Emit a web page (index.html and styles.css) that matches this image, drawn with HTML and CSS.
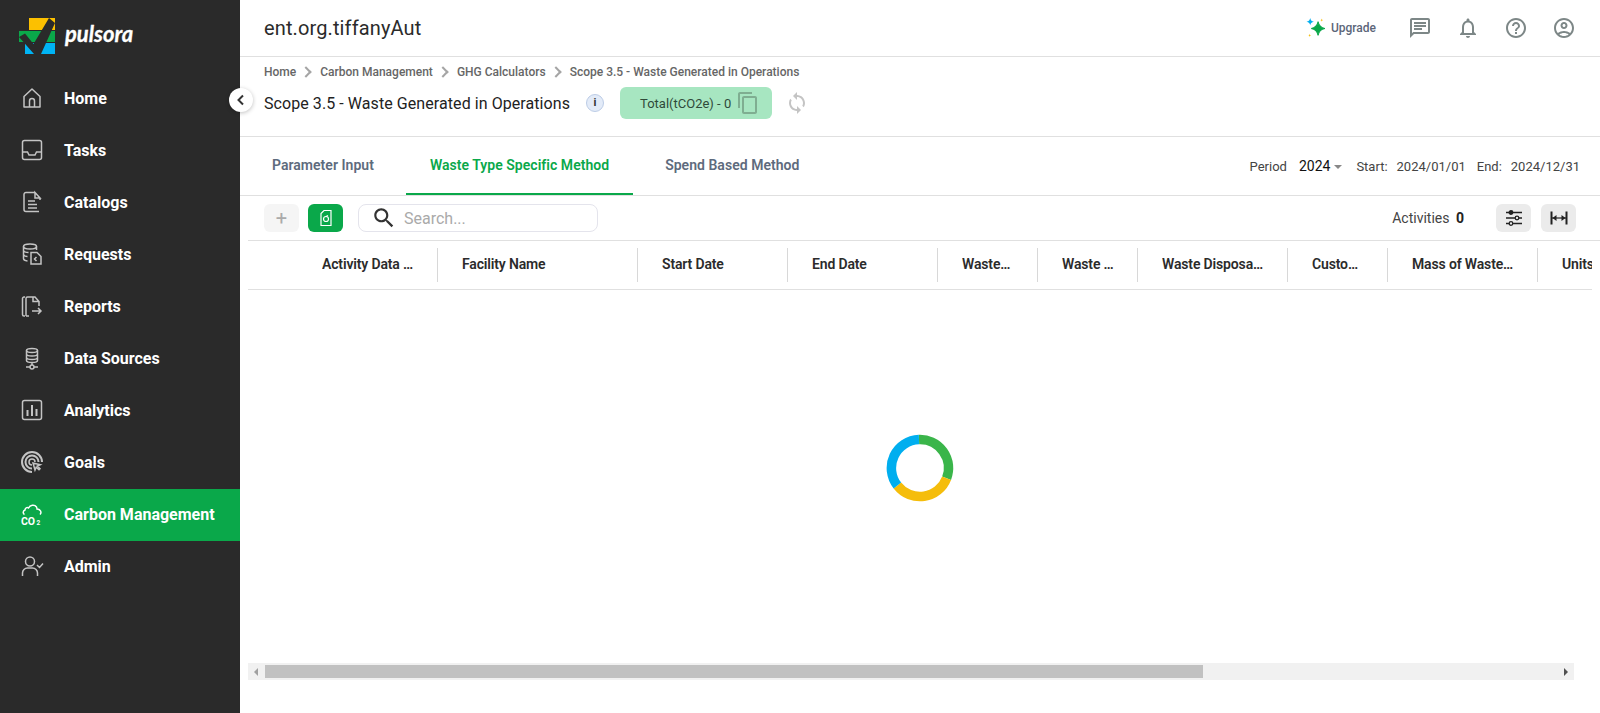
FILE: index.html
```html
<!DOCTYPE html>
<html lang="en">
<head>
    <meta charset="UTF-8">
    <meta name="viewport" content="width=device-width, initial-scale=1.0">
    <title>Pulsora</title>
    <link rel="stylesheet" href="styles.css">
</head>
<body>
<div class="app">
    <aside class="sidebar">
        <div class="logo">
            <svg class="logo-mark" width="38" height="38" viewBox="0 0 38 38">
                <path d="M10 0h26v12H10z" fill="#fcc000"/>
                <path d="M0 13h36v11H0z" fill="#0aa84a"/>
                <path d="M6 25h30v11H6z" fill="#00b4f5"/>
                <path d="M0 19l6-3.500L14.500 26 30 0l6 5-14 31h-7z" fill="#2a2a2a"/>
            </svg>
            <span class="logo-text">pulsora</span>
        </div>
        <nav class="nav">
            <a class="nav-item">
                <svg class="nav-icon" viewBox="0 0 24 24"><path d="M4 21V10.500L12 3l8 7.500V21z" stroke-linejoin="round"/><path d="M9.500 21v-6a2.500 2.500 0 0 1 5 0v6"/></svg>
                <span>Home</span>
            </a>
            <a class="nav-item">
                <svg class="nav-icon" viewBox="0 0 24 24"><rect x="2.500" y="2.500" width="19" height="19" rx="2"/><path d="M2.500 14h5l1.500 3h6l1.500-3h5"/></svg>
                <span>Tasks</span>
            </a>
            <a class="nav-item">
                <svg class="nav-icon" viewBox="0 0 24 24"><path d="M15 2.500H6a2 2 0 0 0-2 2v15a2 2 0 0 0 2 2h13"/><path d="M15 2.500l5 5.500h-5zM20 8v2M8 11h7M8 14.500h9M8 18h9"/></svg>
                <span>Catalogs</span>
            </a>
            <a class="nav-item">
                <svg class="nav-icon" viewBox="0 0 24 24"><ellipse cx="10" cy="4.500" rx="6.500" ry="2.500"/><path d="M3.500 4.500v12c0 1.300 1.500 2.200 4 2.400M16.500 4.500V8M3.500 8.500c.5 1.300 2.500 2 5 2M3.500 12.500c.5 1.300 2 2 4 2"/><path d="M11 10.500h6l4 4v7.500H11z"/><path d="M16.500 15l-2 2 2 2"/></svg>
                <span>Requests</span>
            </a>
            <a class="nav-item">
                <svg class="nav-icon" viewBox="0 0 24 24"><path d="M5 3H4a1.500 1.500 0 0 0-1.500 1.500v16A1.500 1.500 0 0 0 4 22h1"/><path d="M6 22V4.500A1.500 1.500 0 0 1 7.500 3H15l4 4.500V12M6 22h3M13 3v4.500h6M12 17h9M18 14l3 3-3 3"/></svg>
                <span>Reports</span>
            </a>
            <a class="nav-item">
                <svg class="nav-icon" viewBox="0 0 24 24"><ellipse cx="12" cy="4.500" rx="5.500" ry="2"/><path d="M6.500 4.500v10c0 1.100 2.500 2 5.500 2s5.500-.9 5.500-2v-10M6.500 8c0 1.100 2.500 2 5.500 2s5.500-.9 5.500-2M6.500 11.500c0 1.100 2.500 2 5.500 2s5.500-.9 5.500-2M12 16.500V19M6 21h4M14 21h4"/><circle cx="12" cy="21" r="2"/></svg>
                <span>Data Sources</span>
            </a>
            <a class="nav-item">
                <svg class="nav-icon" viewBox="0 0 24 24"><rect x="2.500" y="2.500" width="19" height="19" rx="2"/><path d="M7.500 12v6M12 7v11M16.500 11v7" stroke-width="2"/></svg>
                <span>Analytics</span>
            </a>
            <a class="nav-item">
                <svg class="nav-icon" viewBox="0 0 24 24"><path d="M12 22a10 10 0 1 1 10-10" stroke-width="2"/><path d="M12 18.500a6.500 6.500 0 1 1 6.500-6.500" stroke-width="2"/><path d="M12 15a3 3 0 1 1 3-3"/><path d="M13 13l2 7 1.200-2.800 2.800 2.600 1-1-2.600-2.800 2.800-1.200z" fill="#2a2a2a"/></svg>
                <span>Goals</span>
            </a>
            <a class="nav-item active">
                <svg class="nav-icon" viewBox="0 0 24 24"><path d="M4.500 12.500c-2-1-1.500-4 .5-4.500 0-2 2-3 3.500-2C10 3 14.500 2 16.500 5c.5 1 .5 1.500.5 2 3.500 0 5 3.500 3 5.500"/><text class="co2" x="1" y="22.500">CO</text><text class="co2-sub" x="16.500" y="22.500">2</text></svg>
                <span>Carbon Management</span>
            </a>
            <a class="nav-item">
                <svg class="nav-icon" viewBox="0 0 24 24"><circle cx="10" cy="7.500" r="4.500"/><path d="M2.500 22v-3a5 5 0 0 1 5-5h5a5 5 0 0 1 5 5v3M17 11l2.500 2.500L23 9.500"/></svg>
                <span>Admin</span>
            </a>
        </nav>
    </aside>

    <button class="collapse-btn">
        <svg width="12" height="12" viewBox="0 0 12 12"><path d="M8 1.500L3.500 6 8 10.500" fill="none" stroke="#333" stroke-width="2"/></svg>
    </button>

    <main class="main">
        <header class="topbar">
            <div class="org-name">ent.org.tiffanyAut</div>
            <div class="topbar-right">
                <div class="upgrade">
                    <svg width="21" height="21" viewBox="0 0 20 20">
                        <path d="M11.500 3.500c.7 3.900 2.600 5.800 6.500 6.500-3.900.7-5.800 2.600-6.500 6.500-.7-3.900-2.600-5.800-6.500-6.500 3.900-.7 5.800-2.600 6.500-6.500z" fill="#0aa84a" stroke="#0aa84a"/>
                        <path d="M4 0c.3 2 1.200 2.900 3.500 3.500C5.200 4.100 4.300 5 4 7 3.700 5 2.800 4.100.5 3.500 2.800 2.900 3.700 2 4 0z" fill="#00aeef"/>
                        <path d="M15 .5c.2 1 .6 1.400 1.500 1.500-.9.1-1.300.5-1.500 1.500-.2-1-.6-1.400-1.500-1.500.9-.1 1.300-.5 1.500-1.500zM3.500 15c.2 1 .6 1.400 1.500 1.500-.9.1-1.300.5-1.500 1.500-.2-1-.6-1.400-1.500-1.500.9-.1 1.300-.5 1.500-1.500z" fill="#f5bd0b"/>
                    </svg>
                    <span>Upgrade</span>
                </div>
                <svg class="top-icon" viewBox="0 0 24 24"><path d="M20 2H4c-1.100 0-2 .9-2 2v18l4-4h14c1.100 0 2-.9 2-2V4c0-1.100-.9-2-2-2zm0 14H5.200L4 17.200V4h16v12z"/><path d="M6 12h8v2H6zM6 9h12v2H6zM6 6h12v2H6z"/></svg>
                <svg class="top-icon" viewBox="0 0 24 24"><path d="M12 22c1.100 0 2-.9 2-2h-4c0 1.100.9 2 2 2zm6-6v-5c0-3.070-1.630-5.640-4.500-6.320V4c0-.83-.67-1.500-1.500-1.500s-1.500.67-1.500 1.500v.68C7.640 5.360 6 7.920 6 11v5l-2 2v1h16v-1l-2-2zm-2 1H8v-6c0-2.480 1.510-4.500 4-4.500s4 2.020 4 4.500v6z"/></svg>
                <svg class="top-icon" viewBox="0 0 24 24"><path d="M11 18h2v-2h-2v2zm1-16C6.480 2 2 6.480 2 12s4.480 10 10 10 10-4.480 10-10S17.520 2 12 2zm0 18c-4.410 0-8-3.590-8-8s3.590-8 8-8 8 3.590 8 8-3.590 8-8 8zm0-14c-2.210 0-4 1.790-4 4h2c0-1.100.9-2 2-2s2 .9 2 2c0 2-3 1.750-3 5h2c0-2.250 3-2.500 3-5 0-2.210-1.790-4-4-4z"/></svg>
                <svg class="top-icon" viewBox="0 0 24 24"><path d="M12 2C6.480 2 2 6.480 2 12s4.480 10 10 10 10-4.480 10-10S17.520 2 12 2zM7.350 18.500C8.660 17.560 10.260 17 12 17s3.340.56 4.650 1.500c-1.310.94-2.910 1.500-4.650 1.500s-3.340-.56-4.650-1.500zm10.790-1.380C16.450 15.800 14.320 15 12 15s-4.450.8-6.140 2.120C4.700 15.730 4 13.950 4 12c0-4.420 3.580-8 8-8s8 3.580 8 8c0 1.950-.7 3.730-1.860 5.120zM12 6c-1.930 0-3.500 1.570-3.500 3.500S10.070 13 12 13s3.500-1.570 3.500-3.500S13.930 6 12 6zm0 5c-.83 0-1.500-.67-1.500-1.500S11.170 8 12 8s1.500.67 1.500 1.500S12.830 11 12 11z"/></svg>
            </div>
        </header>

        <section class="page-head">
            <div class="breadcrumb">
                <span>Home</span><i class="crumb-sep"></i>
                <span>Carbon Management</span><i class="crumb-sep"></i>
                <span>GHG Calculators</span><i class="crumb-sep"></i>
                <span>Scope 3.5 - Waste Generated in Operations</span>
            </div>
            <div class="title-row">
                <h1 class="page-title">Scope 3.5 - Waste Generated in Operations</h1>
                <span class="info-badge">i</span>
                <div class="total-btn">
                    <span>Total(tCO2e) - 0</span>
                    <svg width="24" height="24" viewBox="0 0 24 24" fill="#7fae91"><path d="M16 1H4c-1.100 0-2 .9-2 2v14h2V3h12V1zm3 4H8c-1.100 0-2 .9-2 2v14c0 1.100.9 2 2 2h11c1.100 0 2-.9 2-2V7c0-1.100-.9-2-2-2zm0 16H8V7h11v14z"/></svg>
                </div>
                <svg class="sync-icon" width="24" height="24" viewBox="0 0 24 24" fill="#c4c4c4"><path d="M12 4V1L8 5l4 4V6c3.310 0 6 2.690 6 6 0 1.010-.25 1.970-.7 2.800l1.460 1.460C19.540 15.030 20 13.570 20 12c0-4.420-3.580-8-8-8zm0 14c-3.310 0-6-2.690-6-6 0-1.010.25-1.970.7-2.800L5.240 7.740C4.460 8.970 4 10.430 4 12c0 4.420 3.580 8 8 8v3l4-4-4-4v3z"/></svg>
            </div>
        </section>

        <section class="tabs-row">
            <div class="tabs">
                <a class="tab">Parameter Input</a>
                <a class="tab active">Waste Type Specific Method</a>
                <a class="tab">Spend Based Method</a>
            </div>
            <div class="period">
                <span class="period-label">Period</span>
                <span class="period-year">2024</span><i class="caret"></i>
                <span class="date-label">Start:</span>
                <span class="date-value">2024/01/01</span>
                <span class="date-label">End:</span>
                <span class="date-value">2024/12/31</span>
            </div>
        </section>

        <section class="toolbar">
            <button class="tool-btn add-btn">+</button>
            <button class="tool-btn green-btn">
                <svg width="18" height="20" viewBox="0 0 18 20" fill="none" stroke="#fff" stroke-width="1.200"><path d="M7 2.500H14V17.500H4V5.500z"/><circle cx="9" cy="11" r="2.500"/><path d="M9 8.500l2 -1"/></svg>
            </button>
            <div class="search">
                <svg width="26" height="26" viewBox="0 0 24 24" fill="#333"><path d="M15.500 14h-.79l-.28-.27C15.410 12.590 16 11.110 16 9.500 16 5.910 13.090 3 9.500 3S3 5.910 3 9.500 5.910 16 9.500 16c1.610 0 3.090-.59 4.230-1.570l.27.28v.79l5 4.990L20.490 19l-4.990-5zm-6 0C7.010 14 5 11.990 5 9.500S7.010 5 9.500 5 14 7.010 14 9.500 11.990 14 9.500 14z"/></svg>
                <span>Search...</span>
            </div>
            <div class="toolbar-right">
                <span class="activities">Activities <b>0</b></span>
                <button class="tool-btn grey-btn">
                    <svg width="20" height="20" viewBox="0 0 20 20" fill="none" stroke="#222" stroke-width="1.300"><path d="M2 4.500h16M2 10h16M2 15.500h16"/><circle cx="7" cy="4.500" r="1.800" fill="#222"/><circle cx="13" cy="10" r="1.800" fill="#ebebeb"/><circle cx="7" cy="15.500" r="1.800" fill="#ebebeb"/></svg>
                </button>
                <button class="tool-btn grey-btn">
                    <svg width="20" height="20" viewBox="0 0 20 20" fill="#222"><path d="M2.500 3.500v13M17.500 3.500v13" fill="none" stroke="#222" stroke-width="2"/><path d="M3 10h14" fill="none" stroke="#222" stroke-width="1.200"/><path d="M3.500 10l4-3v6zM16.500 10l-4-3v6z"/></svg>
                </button>
            </div>
        </section>

        <section class="table">
            <div class="table-head">
                <div class="check-col"></div>
                <div class="col w140"><span>Activity Data Name</span></div>
                <div class="col w200"><span>Facility Name</span></div>
                <div class="col w150"><span>Start Date</span></div>
                <div class="col w150"><span>End Date</span></div>
                <div class="col w100"><span>WasteType</span></div>
                <div class="col w100"><span>Waste Category</span></div>
                <div class="col w150"><span>Waste Disposal Method</span></div>
                <div class="col w100"><span>Customer</span></div>
                <div class="col w150"><span>Mass of Waste Generated</span></div>
                <div class="col w100"><span>Units</span></div>
            </div>
            <div class="table-body">
                <svg class="spinner" width="68" height="68" viewBox="0 0 68 68" fill="none" stroke-width="9.500">
                    <path d="M33 5.500A28.500 28.500 0 0 1 60.600 44.200" stroke="#3ab54a"/>
                    <path d="M60.600 44.200A28.500 28.500 0 0 1 11.400 51.500" stroke="#f5bd0b"/>
                    <path d="M11.400 51.500A28.500 28.500 0 0 1 33 5.500" stroke="#00aeef"/>
                </svg>
            </div>
        </section>

        <div class="hscroll">
            <i class="arrow-left"></i>
            <div class="hscroll-track"><div class="hscroll-thumb"></div></div>
            <i class="arrow-right"></i>
        </div>
    </main>
</div>
</body>
</html>
```

FILE: styles.css
```css
* {
    box-sizing: border-box;
}
body {
    margin: 0;
    font-family: Roboto, sans-serif;
    background-color: #fff;
    color: #222;
}
.app {
    position: relative;
    display: flex;
    height: 100vh;
    overflow: hidden;
}

/* sidebar */
.sidebar {
    width: 240px;
    flex-shrink: 0;
    background-color: #2a2a2a;
}
.logo {
    height: 73px;
    display: flex;
    align-items: flex-start;
    padding: 18px 0 0 19px;
}
.logo-mark {
    flex-shrink: 0;
}
.logo-text {
    margin: 2px 0 0 8px;
    font-family: Lato, sans-serif;
    font-style: italic;
    font-weight: 700;
    font-size: 22px;
    color: #fff;
    -webkit-text-stroke: 0.3px #fff;
}
.nav-item {
    height: 52px;
    display: flex;
    align-items: center;
    padding: 0 0 2px 20px;
    color: #fff;
    font-size: 16px;
    font-weight: 700;
}
.nav-item.active {
    background-color: #0aa84a;
}
.nav-icon {
    width: 24px;
    height: 24px;
    margin-right: 20px;
    fill: none;
    stroke: #c4c4c4;
    stroke-width: 1.5;
    flex-shrink: 0;
}
.nav-item.active .nav-icon {
    stroke: #fff;
}
.co2 {
    font-family: Roboto, sans-serif;
    font-size: 10.5px;
    font-weight: 700;
    fill: #fff;
    stroke: none;
}
.co2-sub {
    font-family: Roboto, sans-serif;
    font-size: 6.5px;
    font-weight: 700;
    fill: #fff;
    stroke: none;
}
.collapse-btn {
    position: absolute;
    left: 229px;
    top: 88px;
    width: 24px;
    height: 24px;
    padding: 0;
    border: none;
    border-radius: 50%;
    background-color: #fff;
    box-shadow: 0 1px 4px rgba(0, 0, 0, 0.25);
    display: flex;
    align-items: center;
    justify-content: center;
}

/* main */
.main {
    flex: 1;
    min-width: 0;
    display: flex;
    flex-direction: column;
}
.topbar {
    height: 57px;
    flex-shrink: 0;
    display: flex;
    align-items: center;
    justify-content: space-between;
    padding: 0 24px;
    border-bottom: 1px solid #e0e0e0;
}
.org-name {
    font-size: 20px;
    letter-spacing: 0.12px;
    color: #2b2b2b;
}
.topbar-right {
    display: flex;
    align-items: center;
    gap: 24px;
}
.upgrade {
    display: flex;
    align-items: center;
    gap: 4px;
    margin-right: 8px;
    font-size: 12px;
    font-weight: 500;
    color: #5c6679;
}
.top-icon {
    width: 24px;
    height: 24px;
    fill: #7d8787;
}
.page-head {
    height: 80px;
    flex-shrink: 0;
    padding: 7px 24px 0;
    border-bottom: 1px solid #e0e0e0;
}
.breadcrumb {
    display: flex;
    align-items: center;
    font-size: 12px;
    font-weight: 500;
    color: #666;
    height: 16px;
    margin-bottom: 1px;
}
.crumb-sep {
    width: 8px;
    height: 8px;
    margin: 0 10px 0 6px;
    border-top: 2px solid #a5a5a5;
    border-right: 2px solid #a5a5a5;
    transform: rotate(45deg);
}
.title-row {
    display: flex;
    align-items: center;
    margin-top: 7px;
    height: 32px;
}
.page-title {
    margin: 0;
    font-size: 16px;
    font-weight: 400;
    letter-spacing: 0.07px;
    color: #222;
}
.info-badge {
    width: 18px;
    height: 18px;
    margin-left: 16px;
    border-radius: 50%;
    background-color: #e3ebf8;
    border: 1px solid #bccce6;
    font-size: 11px;
    font-weight: 700;
    line-height: 16px;
    text-align: center;
    color: #333;
}
.total-btn {
    width: 152px;
    height: 32px;
    margin-left: 16px;
    display: flex;
    align-items: center;
    gap: 5px;
    padding-left: 20px;
    border-radius: 6px;
    background-color: #a7e6c1;
    font-size: 13px;
    color: #2f4a3a;
}
.sync-icon {
    margin-left: 13px;
}

/* tabs */
.tabs-row {
    height: 59px;
    flex-shrink: 0;
    display: flex;
    align-items: stretch;
    justify-content: space-between;
    padding: 0 20px 0 8px;
    border-bottom: 1px solid #e0e0e0;
}
.tabs {
    display: flex;
    gap: 8px;
}
.tab {
    display: flex;
    align-items: center;
    padding: 0 24px;
    font-size: 14px;
    font-weight: 600;
    letter-spacing: 0.03px;
    color: #5e6b7d;
    border-bottom: 2px solid transparent;
}
.tab.active {
    color: #0aa84a;
    border-bottom-color: #0aa84a;
}
.period {
    display: flex;
    align-items: center;
    font-size: 13px;
    color: #444;
}
.period-label {
    margin-right: 12px;
}
.period-year {
    font-size: 14px;
    color: #111;
}
.caret {
    width: 0;
    height: 0;
    margin: 2px 14px 0 4px;
    border-left: 4px solid transparent;
    border-right: 4px solid transparent;
    border-top: 4px solid #888;
}
.date-label {
    margin-right: 9px;
}
.date-value {
    margin-right: 11px;
}
.date-value:last-child {
    margin-right: 0;
}

/* toolbar */
.toolbar {
    height: 45px;
    flex-shrink: 0;
    margin-left: 8px;
    display: flex;
    align-items: flex-start;
    padding: 8px 24px 0 16px;
    border-bottom: 1px solid #e0e0e0;
}
.tool-btn {
    height: 28px;
    padding: 0;
    border: none;
    border-radius: 6px;
    display: flex;
    align-items: center;
    justify-content: center;
}
.add-btn {
    width: 35px;
    background-color: #f5f5f5;
    color: #aaa;
    font-size: 20px;
    font-family: Roboto, sans-serif;
}
.green-btn {
    width: 35px;
    margin-left: 9px;
    background-color: #0aa84a;
}
.search {
    width: 240px;
    height: 28px;
    margin-left: 15px;
    display: flex;
    align-items: center;
    gap: 7px;
    padding-left: 12px;
    border: 1px solid #e4e4ec;
    border-radius: 8px;
    font-size: 16px;
    color: #aaa;
}
.toolbar-right {
    margin-left: auto;
    display: flex;
    align-items: center;
    gap: 10px;
}
.activities {
    margin-right: 22px;
    font-size: 14px;
    color: #444;
}
.activities b {
    margin-left: 3px;
    color: #222;
    font-weight: 700;
}
.grey-btn {
    width: 35px;
    background-color: #ebebeb;
}

/* table */
.table {
    flex: 1;
    min-height: 0;
    margin: 0 8px;
    display: flex;
    flex-direction: column;
}
.table-head {
    height: 49px;
    flex-shrink: 0;
    display: flex;
    align-items: center;
    overflow: hidden;
    border-bottom: 1px solid #e0e0e0;
}
.check-col {
    width: 50px;
    flex-shrink: 0;
}
.col {
    height: 34px;
    flex-shrink: 0;
    display: flex;
    align-items: center;
    padding: 0 21px 2px 24px;
    border-right: 1px solid #d8d8d8;
    font-size: 14px;
    font-weight: 600;
    letter-spacing: -0.15px;
    color: #2b2b2b;
}
.col span {
    overflow: hidden;
    white-space: nowrap;
    text-overflow: ellipsis;
}
.w100 { width: 100px; }
.w140 { width: 140px; }
.w150 { width: 150px; }
.w200 { width: 200px; }
.table-body {
    flex: 1;
    display: flex;
    align-items: center;
    justify-content: center;
    padding-bottom: 17px;
}

/* scrollbar at the bottom */
.hscroll {
    height: 17px;
    flex-shrink: 0;
    margin: 0 26px 33px 8px;
    display: flex;
    align-items: center;
    background-color: #f1f1f1;
}
.hscroll-track {
    flex: 1;
    height: 13px;
}
.hscroll-thumb {
    width: 938px;
    height: 100%;
    margin-left: 1px;
    background-color: #c1c1c1;
}
.arrow-left, .arrow-right {
    width: 16px;
    flex-shrink: 0;
    display: flex;
    justify-content: center;
}
.arrow-left::before {
    content: "";
    border-top: 4px solid transparent;
    border-bottom: 4px solid transparent;
    border-right: 4px solid #a0a0a0;
}
.arrow-right::before {
    content: "";
    border-top: 4px solid transparent;
    border-bottom: 4px solid transparent;
    border-left: 4px solid #505050;
}
```
